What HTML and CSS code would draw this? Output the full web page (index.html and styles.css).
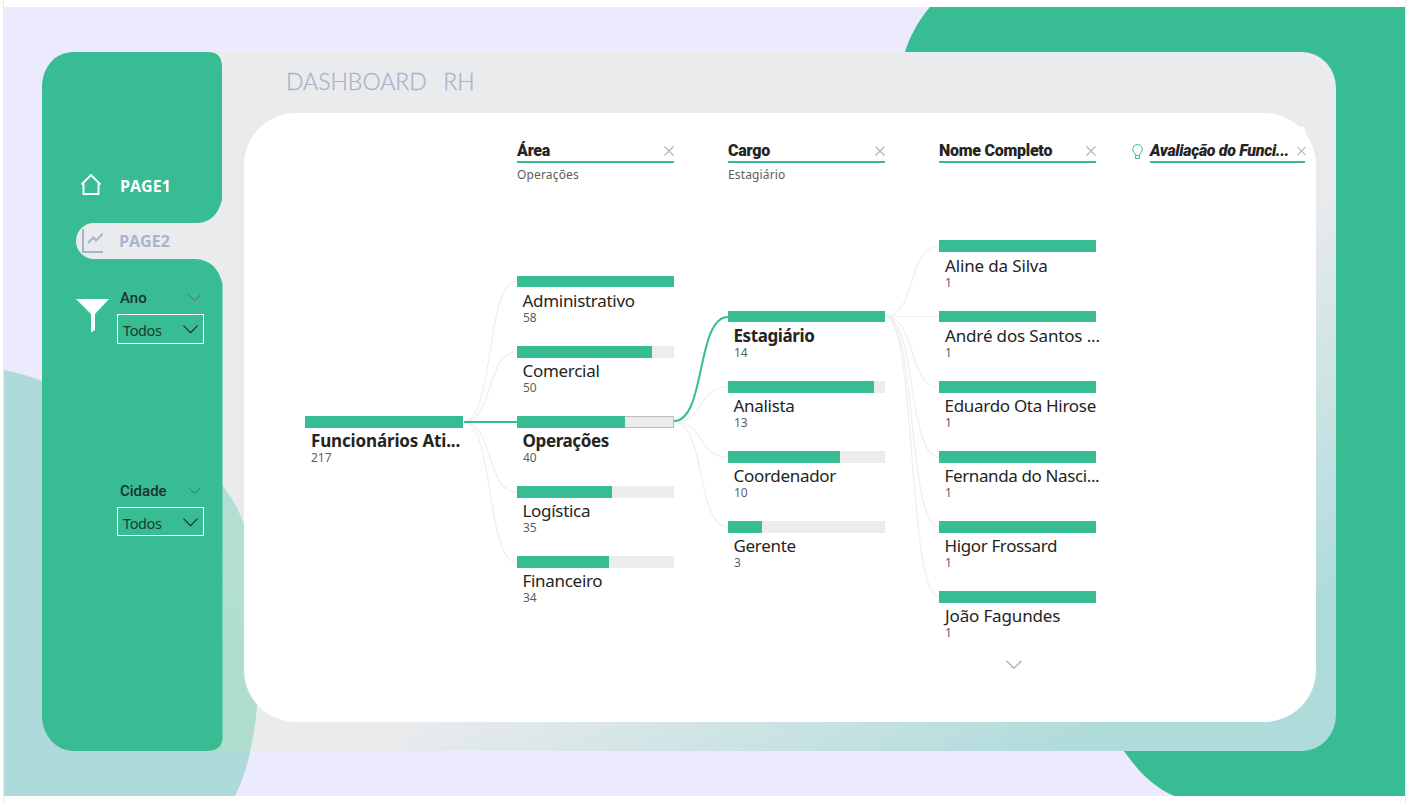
FILE: index.html
```html
<!DOCTYPE html>
<html lang="pt-BR">
<head>
<meta charset="utf-8">
<title>Dashboard RH</title>
<link rel="stylesheet" href="styles.css">
</head>
<body>
<div class="report">
  <svg class="backdrop" viewBox="4 7 1401 789" width="1401" height="789" aria-hidden="true">
    <defs>
      <linearGradient id="frame" gradientUnits="userSpaceOnUse" x1="421" y1="715" x2="603" y2="1026">
        <stop offset="0" stop-color="#eaebed"/><stop offset="1" stop-color="#afdbdb"/>
      </linearGradient>
      <linearGradient id="blob" x1="0" y1="0" x2="0" y2="1">
        <stop offset="0" stop-color="#b4dfd5"/><stop offset="1" stop-color="#aedecb"/>
      </linearGradient>
      <clipPath id="frameClip"><rect x="42" y="52" width="1294" height="699" rx="34" ry="36"/></clipPath>
    </defs>
    <rect x="4" y="7" width="1401" height="789" fill="#ecebfe"/>
    <path d="M930 7C918 21 909 37 903 58L903 400L1124 751C1137 770 1153 787 1174 796H1405V7Z" fill="#38bc93"/>
    <path d="M4 370Q24 374 42 381C125 405 185 445 222 485Q236 502 243 522C262 580 260 660 257 706Q253 760 235 796H4Z" fill="#aedadb"/>
    <rect x="42" y="52" width="1294" height="699" rx="34" ry="36" fill="url(#frame)"/>
    <g clip-path="url(#frameClip)">
      <path d="M180 440L222 485Q236 502 243 522C262 580 260 660 257 706Q255 732 250 751H180Z" fill="url(#blob)"/>
      <path d="M42 700H200V751H42Z" fill="#aedadb"/>
    </g>
    <path d="M42 88C42 67 55 52 74 52H208Q222 52 222 67V200Q216 223 196 223H94A18 18 0 0 0 94 259H195Q217 260 222.500 284V738Q222 751 206 751H74C56 751 42 735 42 716Z" fill="#38bc93"/>
  </svg>

  <div class="frame">
    <aside class="sidebar">
      <nav class="nav">
        <a class="nav-item"><svg width="24" height="24" viewBox="0 0 24 24"><path d="M2.500 11.500L12 2L21.500 11.500M4.500 9.500V21H19.500V9.500" fill="none" stroke="#fff" stroke-width="1.900"/></svg><span class="p1">PAGE1</span></a>
        <a class="nav-item active"><svg width="24" height="26" viewBox="0 0 24 26"><path d="M4 1V24H24" fill="none" stroke="#a9b3cf" stroke-width="2"/><path d="M9 15L14.500 9.500L17 12.500L24 5.500" fill="none" stroke="#a9b3cf" stroke-width="2"/></svg><span class="p2">PAGE2</span></a>
      </nav>
      <div class="filters">
        <svg class="funnel" width="34" height="35" viewBox="0 0 34 35"><path d="M0 0H33L19 15V31L15 33.500V15Z" fill="#fff"/></svg>
        <div class="slicers">
          <section class="slicer">
            <header class="slicer-head"><span class="ano">Ano</span><svg width="13" height="8" viewBox="0 0 13 8"><path d="M.5 .7L6.500 6.500L12.500 .7" fill="none" stroke="#4d6f63"/></svg></header>
            <div class="select"><span>Todos</span><svg width="15" height="9" viewBox="0 0 15 9"><path d="M.5 .7L7.500 7.700L14.500 .7" fill="none" stroke="#222" stroke-width="1.100"/></svg></div>
          </section>
          <section class="slicer">
            <header class="slicer-head"><span class="cidade">Cidade</span><svg width="13" height="8" viewBox="0 0 13 8"><path d="M.5 .7L6.500 6.500L12.500 .7" fill="none" stroke="#4d6f63"/></svg></header>
            <div class="select short"><span>Todos</span><svg width="15" height="9" viewBox="0 0 15 9"><path d="M.5 .7L7.500 7.700L14.500 .7" fill="none" stroke="#222" stroke-width="1.100"/></svg></div>
          </section>
        </div>
      </div>
    </aside>

    <main class="main">
      <h1 class="title">DASHBOARD&nbsp; RH</h1>
      <div class="card">
        <i class="card-corner"></i>
        <svg class="links" width="1072" height="609" viewBox="244 113 1072 609">
          <g fill="none" stroke="#eee" stroke-width="1.200">
            <path d="M463 422C495 422 485 281 517 281M463 422C495 422 485 352 517 352M463 422C495 422 485 492 517 492M463 422C495 422 485 562 517 562"/>
            <path d="M674 422C706 422 696 387 728 387M674 422C706 422 696 457 728 457M674 422C706 422 696 527 728 527"/>
            <path d="M885 316.500C917 316.500 907 246 939 246M885 316.500H939M885 316.500C917 316.500 907 387 939 387M885 316.500C917 316.500 907 457 939 457M885 316.500C917 316.500 907 527 939 527M885 316.500C917 316.500 907 597 939 597"/>
          </g>
          <path d="M464 422H517M674 421C706 421 696 317 728 317" fill="none" stroke="#38bc93" stroke-width="2"/>
        </svg>
        <div class="heads">
          <div class="head"><div class="head-row"><b>Área</b><svg class="x" viewBox="0 0 10 10"><path d="M.5 .5L9.500 9.500M9.500 .5L.5 9.500"/></svg></div><p>Operações</p></div>
          <div class="head"><div class="head-row"><b>Cargo</b><svg class="x" viewBox="0 0 10 10"><path d="M.5 .5L9.500 9.500M9.500 .5L.5 9.500"/></svg></div><p>Estagiário</p></div>
          <div class="head"><div class="head-row"><b>Nome Completo</b><svg class="x" viewBox="0 0 10 10"><path d="M.5 .5L9.500 9.500M9.500 .5L.5 9.500"/></svg></div></div>
          <svg class="bulb" width="11" height="16" viewBox="0 0 11 16"><path d="M3.500 11.500C3.500 9 .7 8 .7 5.200A4.800 4.700 0 0 1 10.300 5.200C10.300 8 7.500 9 7.500 11.500ZM3.500 12V14.500H7.500V12" fill="none" stroke="#38bc93"/></svg>
          <div class="head head-ai"><div class="head-row"><b>Avaliação do Funci...</b><svg class="x" viewBox="0 0 10 10"><path d="M.5 .5L9.500 9.500M9.500 .5L.5 9.500"/></svg></div></div>
        </div>
        <div class="tree">
          <div class="col c0">
            <div class="node"><div class="bar"><i style="width:100%"></i></div><strong class="wide">Funcionários Ati...</strong><small>217</small></div>
          </div>
          <div class="col c1">
            <div class="node"><div class="bar thin"><i style="width:100%"></i></div><span>Administrativo</span><small>58</small></div>
            <div class="node"><div class="bar"><i style="width:86.200%"></i></div><span>Comercial</span><small>50</small></div>
            <div class="node"><div class="bar outlined"><i style="width:69%"></i></div><strong>Operações</strong><small>40</small></div>
            <div class="node"><div class="bar"><i style="width:60.500%"></i></div><span>Logística</span><small>35</small></div>
            <div class="node"><div class="bar"><i style="width:58.600%"></i></div><span>Financeiro</span><small>34</small></div>
          </div>
          <div class="col c2">
            <div class="node"><div class="bar thin"><i style="width:100%"></i></div><strong>Estagiário</strong><small>14</small></div>
            <div class="node"><div class="bar"><i style="width:93%"></i></div><span>Analista</span><small>13</small></div>
            <div class="node"><div class="bar"><i style="width:71.400%"></i></div><span>Coordenador</span><small>10</small></div>
            <div class="node"><div class="bar"><i style="width:21.600%"></i></div><span>Gerente</span><small>3</small></div>
          </div>
          <div class="col c3">
            <div class="node"><div class="bar raised"><i style="width:100%"></i></div><span class="wide">Aline da Silva</span><small>1</small></div>
            <div class="node"><div class="bar thin"><i style="width:100%"></i></div><span class="wide">André dos Santos ...</span><small>1</small></div>
            <div class="node"><div class="bar"><i style="width:100%"></i></div><span>Eduardo Ota Hirose</span><small>1</small></div>
            <div class="node"><div class="bar"><i style="width:100%"></i></div><span class="tight">Fernanda do Nasci...</span><small>1</small></div>
            <div class="node"><div class="bar"><i style="width:100%"></i></div><span class="tight">Higor Frossard</span><small>1</small></div>
            <div class="node"><div class="bar"><i style="width:100%"></i></div><span class="wide">João Fagundes</span><small>1</small></div>
            <svg class="more" width="16" height="10" viewBox="0 0 16 10"><path d="M.7 1L8 8.300L15.300 1" fill="none" stroke="#b3b3b3" stroke-width="1.500"/></svg>
          </div>
        </div>
      </div>
    </main>
  </div>
</div>
</body>
</html>
```
FILE: styles.css
```css
* { box-sizing: border-box; }
body { margin: 0; background: #fff; font-family: "Noto Sans", sans-serif; color: #252423; overflow: hidden; }
.report { position: relative; width: 1403px; height: 803px; margin-left: 3px; padding: 52px 0 0 38px; border-left: 1px solid #e9e9e9; border-right: 1px solid #ececec; }
.backdrop { position: absolute; left: 0; top: 7px; display: block; }
.frame { position: relative; display: flex; width: 1294px; height: 699px; }

.sidebar { width: 202px; padding-top: 119px; flex: none; }
.nav-item { display: flex; align-items: center; height: 27px; padding-left: 37px; font: 700 16px/20px "Open Sans", sans-serif; color: #fff; }
.nav-item span { margin: 2px 0 0 17px; }
.nav-item.active { margin-top: 29px; color: #a9b3cf; }
.nav-item.active span { margin: 0 0 0 16px; }
.filters { display: flex; gap: 7px; padding: 34px 0 0 34px; }
.funnel { flex: none; margin-top: 11px; }
.slicers { display: flex; flex-direction: column; gap: 137px; width: 87px; }
.slicer-head { display: flex; justify-content: space-between; align-items: center; height: 26px; padding: 0 3px 6px 3px; font: 500 15px/20px Roboto, sans-serif; color: #1c332b; }
.select { display: flex; justify-content: space-between; align-items: center; width: 87px; height: 30px; padding: 2px 5px 0; border: 1px solid #fff; font-size: 14.500px; letter-spacing: -.4px; color: #1f3a31; }
.select.short { height: 29px; }
.select svg { margin-top: -1px; }

.main { flex: 1; min-width: 0; }
.title { margin: 0; height: 61px; padding: 14px 0 0 42px; font: 300 23px/30px Lato, sans-serif; word-spacing: 2px; color: #a8b4c9; -webkit-text-stroke: .3px #a8b4c9; white-space: pre; }
.card { position: relative; width: 1072px; height: 609px; border-radius: 52px; background: #fff; }
.card-corner { position: absolute; right: 11px; top: 14px; width: 30px; height: 24px; background: #fff; }
.links { position: absolute; left: 0; top: 0; }

.heads { position: relative; display: flex; height: 127px; padding: 28px 0 0 273px; }
.head { width: 157px; margin-right: 54px; }
.head-row { display: flex; align-items: center; justify-content: space-between; height: 22px; padding-bottom: 1px; border-bottom: 2px solid #38bc93; font: 700 16px/18px Roboto, sans-serif; letter-spacing: -.25px; white-space: nowrap; }
.head p { margin: 4px 0 0; font-size: 12px; line-height: 16px; letter-spacing: .15px; color: #605e5c; }
.x { width: 10px; height: 10px; stroke: #b3b3b3; stroke-width: 1.200; fill: none; overflow: visible; }
.bulb { margin: 3px 7px 0 -18px; }
.head-ai { width: 155px; margin-right: 0; }
.head-ai .head-row { font-style: italic; letter-spacing: -.32px; }
.head-ai .x { margin-right: -1px; width: 9px; }

.tree { position: relative; display: grid; grid-template-columns: 158px 157px 157px 157px; column-gap: 54px; padding-left: 61px; align-items: start; }
.c0 { padding-top: 176px; }
.c1 { padding-top: 36px; }
.c2 { padding-top: 71px; }
.c3 { padding-top: 1px; }
.node { height: 70px; display: flex; flex-direction: column; align-items: flex-start; }
.bar { width: 100%; height: 12px; margin-bottom: 2px; background: #ececec; flex: none; }
.bar.thin { height: 11px; margin-bottom: 3px; }
.bar.raised { margin-top: -1px; margin-bottom: 3px; }
.bar i { display: block; height: 100%; background: #38bc93; }
.bar.outlined { border: 1px solid #bdbdbd; border-left: 0; background: #ececec; }
.bar.outlined i { height: 12px; margin-top: -1px; }
.node span, .node strong { height: 21px; margin-left: 5.500px; font-size: 17px; line-height: 22px; letter-spacing: -.3px; white-space: nowrap; }
.node strong { letter-spacing: -.4px; }
.node .wide { margin-left: 6px; letter-spacing: -.15px; }
.node .tight { letter-spacing: -.38px; }
.node small { margin-left: 6px; font-size: 12px; line-height: 14px; color: #605e5c; }
.more { display: block; margin: -1px 0 0 67px; }
```
